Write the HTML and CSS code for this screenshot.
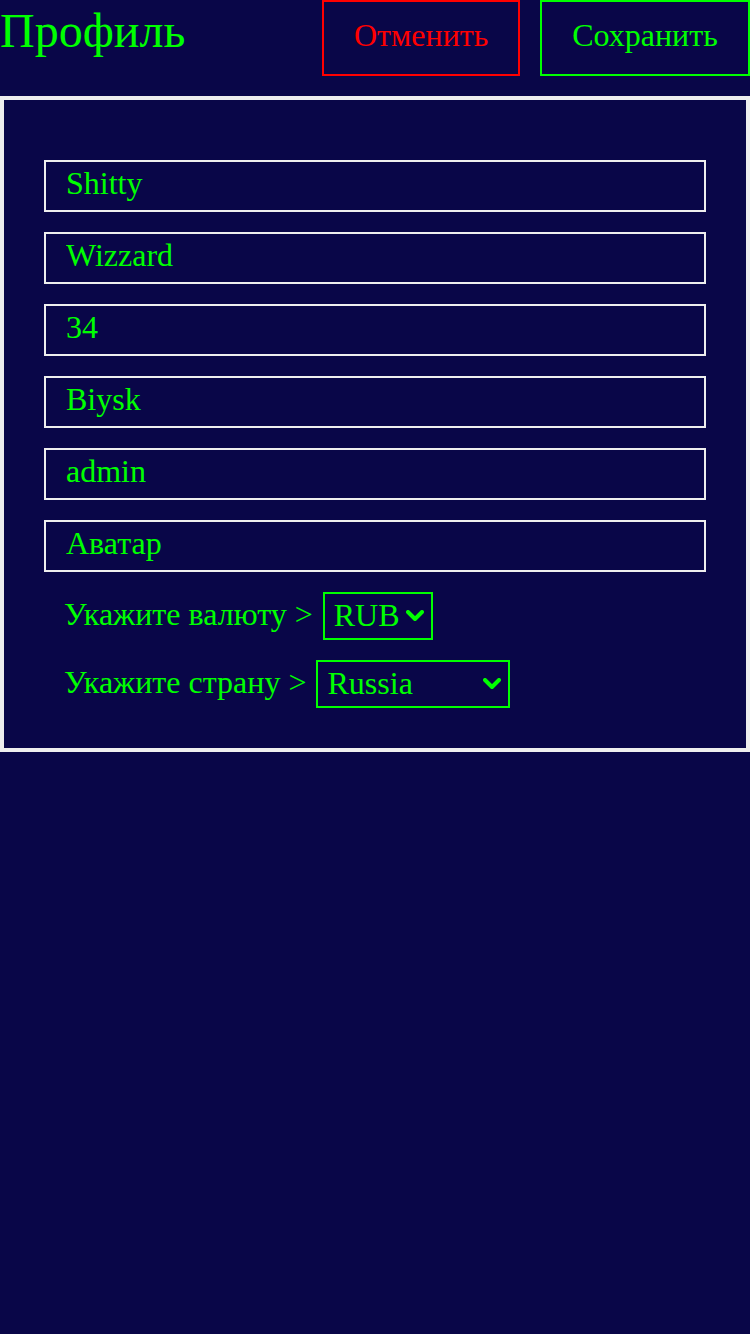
FILE: index.html
```html
<!DOCTYPE html>
<html lang="ru">
<head>
<meta charset="utf-8">
<title>Профиль</title>
<link rel="stylesheet" href="styles.css">
</head>
<body>
<header class="top">
  <h1 class="title">Профиль</h1>
  <div class="actions">
    <button class="btn btn-cancel" type="button">Отменить</button>
    <button class="btn btn-save" type="button">Сохранить</button>
  </div>
</header>
<main class="card">
  <form class="form">
    <input class="field" type="text" value="Shitty">
    <input class="field" type="text" value="Wizzard">
    <input class="field" type="text" value="34">
    <input class="field" type="text" value="Biysk">
    <input class="field" type="text" value="admin">
    <input class="field" type="text" value="Аватар">
    <div class="row">
      <span class="label">Укажите валюту &gt;</span>
      <span class="sel-wrap sel-currency">
        <select class="sel">
          <option>RUB</option>
          <option>USD</option>
          <option>EUR</option>
        </select>
        <svg class="chev" width="18" height="12" viewBox="0 0 18 12"><path d="M2 2 L9 9 L16 2" fill="none" stroke="#00ff00" stroke-width="4" stroke-linecap="round" stroke-linejoin="round"/></svg>
      </span>
    </div>
    <div class="row">
      <span class="label">Укажите страну &gt;</span>
      <span class="sel-wrap sel-country">
        <select class="sel">
          <option>Russia</option>
          <option>Kazakhstan</option>
          <option>Belarus</option>
        </select>
        <svg class="chev" width="18" height="12" viewBox="0 0 18 12"><path d="M2 2 L9 9 L16 2" fill="none" stroke="#00ff00" stroke-width="4" stroke-linecap="round" stroke-linejoin="round"/></svg>
      </span>
    </div>
  </form>
</main>
</body>
</html>
```

FILE: styles.css
```css
* { box-sizing: border-box; }

html, body {
  margin: 0;
  padding: 0;
  background: #090648;
  min-height: 100%;
}

body {
  font-family: "Liberation Serif", "Times New Roman", serif;
  color: #00ff00;
  width: 750px;
  height: 1334px;
}

.top {
  display: flex;
  justify-content: space-between;
  align-items: flex-start;
  height: 76px;
  margin-bottom: 20px;
}

.title {
  margin: 0;
  font-size: 48px;
  font-weight: normal;
  line-height: 62px;
  color: #00ff00;
}

.actions {
  display: flex;
  gap: 20px;
}

.btn {
  font-family: "Liberation Serif", "Times New Roman", serif;
  font-size: 32px;
  line-height: 36px;
  height: 76px;
  padding: 0 30px 6px;
  background: transparent;
  border: 2px solid;
  margin: 0;
}

.btn-cancel {
  color: #ff0000;
  border-color: #ff0000;
  width: 198px;
}

.btn-save {
  color: #00ff00;
  border-color: #00ff00;
  width: 210px;
}

.card {
  border: 4px solid #eeeeee;
  padding: 60px 40px 40px;
}

.form {
  display: flex;
  flex-direction: column;
  gap: 20px;
}

.field {
  display: block;
  width: 100%;
  height: 52px;
  background: transparent;
  border: 2px solid #eeeeee;
  color: #00ff00;
  font-family: "Liberation Serif", "Times New Roman", serif;
  font-size: 32px;
  padding: 0 20px 6px;
  margin: 0;
  outline: none;
}

.row {
  display: flex;
  align-items: center;
  gap: 10px;
  padding-left: 20px;
  height: 48px;
}

.label {
  font-size: 32px;
  line-height: 36px;
  padding-bottom: 5px;
}

.sel-wrap {
  position: relative;
  display: inline-block;
  height: 48px;
}

.sel {
  -webkit-appearance: none;
  appearance: none;
  height: 48px;
  background: transparent;
  border: 2px solid #00ff00;
  border-radius: 0;
  color: #00ff00;
  font-family: "Liberation Serif", "Times New Roman", serif;
  font-size: 32px;
  padding: 0 0 2px 9px;
  margin: 0;
  outline: none;
}

.sel option {
  background: #090648;
}

.sel-currency .sel { width: 110px; }
.sel-country .sel { width: 194px; }

.chev {
  position: absolute;
  right: 9px;
  top: 18px;
  pointer-events: none;
}
```
